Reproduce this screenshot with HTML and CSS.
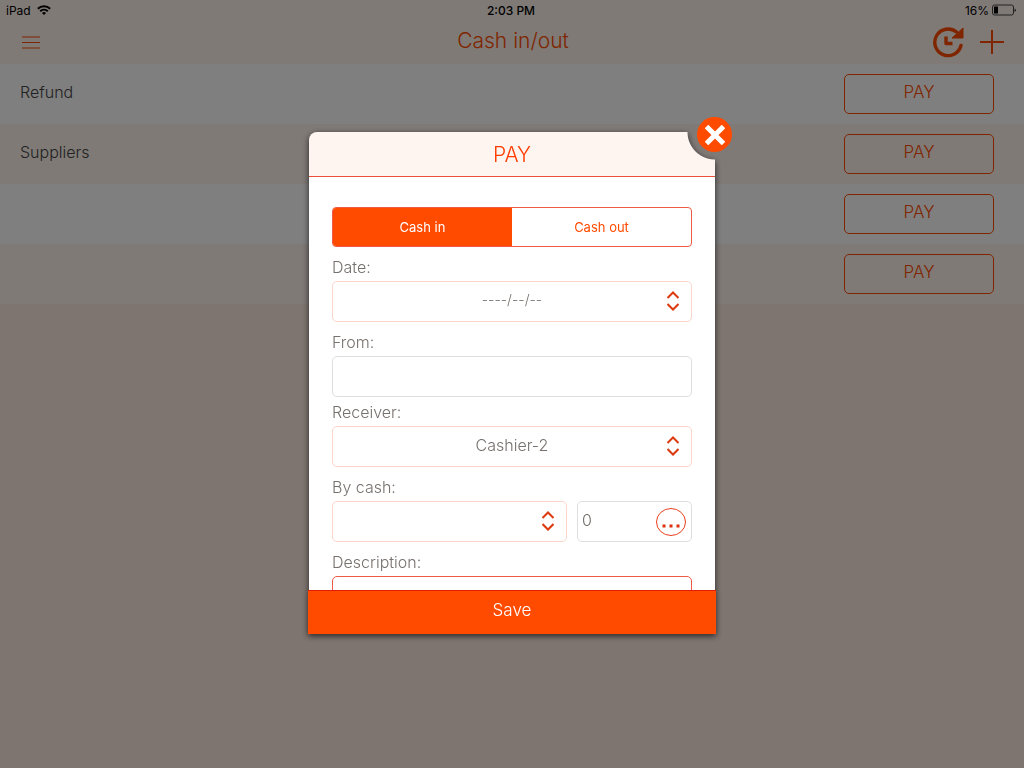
FILE: index.html
```
<!DOCTYPE html>
<html lang="en">
<head>
    <meta charset="UTF-8">
    <meta name="viewport" content="width=device-width, initial-scale=1.0">
    <title>Cash in/out</title>
    <link rel="stylesheet" href="styles.css">
</head>
<body>
    <header class="top">
        <div class="status-bar">
            <div class="status-left">
                <span>iPad</span>
                <svg width="14" height="10" viewBox="0 0 14 10" fill="none" stroke="#000" stroke-width="2">
                    <path d="M0.8 3.8a9 9 0 0 1 12.4 0"/>
                    <path d="M3.2 6.3a5.5 5.5 0 0 1 7.6 0"/>
                    <path d="M7 10L5 8a3 3 0 0 1 4 0z" fill="#000" stroke="none"/>
                </svg>
            </div>
            <time class="clock">2:03 PM</time>
            <div class="status-right">
                <span>16%</span>
                <svg width="24" height="12" viewBox="0 0 24 12">
                    <rect x="0.5" y="1" width="21" height="10" rx="2" fill="none" stroke="#444"/>
                    <rect x="2" y="2.500" width="4" height="7" fill="#000"/>
                    <path d="M22.5 4.500v3.500q1.500-.5 1.500-1.700t-1.500-1.800z" fill="#444"/>
                </svg>
            </div>
        </div>
        <nav class="nav-bar">
            <button class="icon-btn" type="button" aria-label="Menu">
                <svg width="18" height="14" viewBox="0 0 18 14" stroke="#ff4b00">
                    <path d="M0 7.500h18"/>
                    <path d="M0 2h18M0 13h18" stroke-width="2" opacity="0.5"/>
                </svg>
            </button>
            <h1 class="page-title">Cash in/out</h1>
            <div class="nav-actions">
                <button class="icon-btn" type="button" aria-label="History">
                    <svg width="32" height="32" viewBox="0 0 32 32" fill="none" stroke="#ff4b00">
                        <path d="M29 19.500A13.300 13.300 0 1 1 24.500 6" stroke-width="3.400" stroke-linecap="round"/>
                        <path d="M31 2v10H20z" fill="#ff4b00" stroke="#ff4b00" stroke-linejoin="round"/>
                        <path d="M14 10.500v7h6.500" stroke-width="3.400" stroke-linejoin="round"/>
                    </svg>
                </button>
                <button class="icon-btn" type="button" aria-label="Add">
                    <svg width="24" height="24" viewBox="0 0 24 24" stroke="#ff4b00" stroke-width="2">
                        <path d="M0 12h24M12 0v24"/>
                    </svg>
                </button>
            </div>
        </nav>
    </header>

    <main>
        <ul class="list">
            <li class="row"><span>Refund</span><button class="pay-btn" type="button">PAY</button></li>
            <li class="row"><span>Suppliers</span><button class="pay-btn" type="button">PAY</button></li>
            <li class="row"><span></span><button class="pay-btn" type="button">PAY</button></li>
            <li class="row"><span></span><button class="pay-btn" type="button">PAY</button></li>
        </ul>
    </main>

    <div class="overlay">
        <div class="dialog" role="dialog" aria-labelledby="dialog-title">
            <form class="panel">
                <h2 class="dialog-title" id="dialog-title">PAY</h2>

                <div class="dialog-body">
                    <div class="segmented">
                        <button class="segment active" type="button">Cash in</button>
                        <button class="segment" type="button">Cash out</button>
                    </div>

                    <label for="date">Date:</label>
                    <div class="select-box">
                        <select class="date" id="date"><option>----/--/--</option></select>
                        <svg class="arrows" width="12" height="20" viewBox="0 0 12 20"><path d="M0.500 7L6 1.500 11.500 7M0.500 13L6 18.500 11.500 13"/></svg>
                    </div>

                    <label for="from">From:</label>
                    <input class="field from" id="from" type="text">

                    <label for="receiver">Receiver:</label>
                    <div class="select-box">
                        <select id="receiver"><option>Cashier-2</option></select>
                        <svg class="arrows" width="12" height="20" viewBox="0 0 12 20"><path d="M0.500 7L6 1.500 11.500 7M0.500 13L6 18.500 11.500 13"/></svg>
                    </div>

                    <label for="cash">By cash:</label>
                    <div class="cash-line">
                        <div class="select-box">
                            <select id="cash"><option></option></select>
                            <svg class="arrows" width="12" height="20" viewBox="0 0 12 20"><path d="M0.500 7L6 1.500 11.500 7M0.500 13L6 18.500 11.500 13"/></svg>
                        </div>
                        <div class="amount">
                            <input id="amount" type="text" value="0" aria-label="Amount">
                            <button class="more-btn" type="button" aria-label="More">
                                <svg width="30" height="28" viewBox="0 0 30 28">
                                    <ellipse cx="15" cy="14" rx="14.500" ry="13.500" fill="none" stroke="#e8401c"/>
                                    <path d="M6.500 16.500h3v3h-3zM13.500 16.500h3v3h-3zM20.500 16.500h3v3h-3z" fill="#e03010"/>
                                </svg>
                            </button>
                        </div>
                    </div>

                    <label for="description">Description:</label>
                    <textarea class="description" id="description"></textarea>
                </div>

                <button class="save-btn" type="submit">Save</button>
            </form>
            <button class="close-btn" type="button" aria-label="Close">
                <svg width="20" height="20" viewBox="0 0 20 20" stroke="#fff" stroke-width="5">
                    <path d="M1.500 1.500l17 17M18.500 1.500l-17 17"/>
                </svg>
            </button>
        </div>
    </div>
</body>
</html>
```
FILE: styles.css
```
* {
    box-sizing: border-box;
}

body {
    margin: 0;
    min-height: 100vh;
    background-color: #ffebe0;
    font-family: Inter, 'Liberation Sans', sans-serif;
    font-size: 16px;
    font-weight: 300;
    color: #444;
}

button, input, select, textarea {
    margin: 0;
    font: inherit;
    color: inherit;
}

button {
    padding: 0;
    border: none;
    background: none;
    cursor: pointer;
}

svg {
    display: block;
}

.top {
    background-color: #fff4ed;
}

.status-bar {
    display: grid;
    grid-template-columns: 1fr auto 1fr;
    align-items: center;
    height: 20px;
    padding: 0 8px 0 6px;
    font-size: 12px;
    font-weight: 400;
    color: #000;
}

.status-left, .status-right {
    display: flex;
    align-items: center;
    gap: 6px;
}

.status-right {
    justify-content: flex-end;
    gap: 3px;
}

.clock {
    font-weight: 500;
}

.nav-bar {
    display: grid;
    grid-template-columns: 1fr auto 1fr;
    align-items: center;
    height: 44px;
    padding: 0 20px 0 22px;
}

.icon-btn {
    justify-self: start;
}

.page-title {
    margin: 0;
    padding-bottom: 3px;
    font-size: 21px;
    font-weight: 300;
    color: #ff4b00;
}

.nav-actions {
    display: flex;
    justify-content: flex-end;
    align-items: center;
    gap: 16px;
}

.list {
    margin: 0;
    padding: 0;
    list-style: none;
}

.row {
    display: flex;
    justify-content: space-between;
    align-items: center;
    height: 60px;
    padding: 0 30px 0 20px;
    background-color: #fff;
}

.row:nth-child(even) {
    background-color: #fff4ed;
}

.row span {
    padding-bottom: 4px;
}

.pay-btn {
    width: 150px;
    height: 40px;
    padding-bottom: 4px;
    border: 1px solid #ff4b00;
    border-radius: 5px;
    font-size: 17px;
    color: #ff4b00;
}

.overlay {
    position: fixed;
    inset: 0;
    display: flex;
    justify-content: center;
    align-items: center;
    padding-bottom: 2px;
    background-color: rgba(0, 0, 0, 0.5);
}

.dialog {
    position: relative;
    width: 406px;
    color: #77706c;
}

.panel {
    filter: drop-shadow(0 2px 3px rgba(0, 0, 0, 0.7));
}

/* top right corner is cut out around the close button */
.dialog-title {
    margin: 0;
    padding-top: 1px;
    border-bottom: 1px solid #e8503a;
    border-radius: 8px 0 0 0;
    background: radial-gradient(circle at 100% 0, transparent 27px, #fff5f0 28px) border-box;
    font-size: 21px;
    font-weight: 300;
    line-height: 43px;
    text-align: center;
    color: #ff3c00;
}

.close-btn {
    position: absolute;
    top: -15px;
    right: -17px;
    display: flex;
    justify-content: center;
    align-items: center;
    width: 35px;
    height: 35px;
    border-radius: 50%;
    background-color: #ff4b00;
}

.dialog-body {
    height: 413px;
    padding: 30px 23px 0;
    overflow: hidden;
    background-color: #fff;
}

.segmented {
    display: flex;
    height: 40px;
    margin-bottom: 10px;
    border: 1px solid #ee5a45;
    border-radius: 4px;
    overflow: hidden;
}

.segment {
    flex: 1;
    padding-bottom: 1px;
    font-size: 13px;
    font-weight: 400;
    color: #ff4b00;
}

.segment.active {
    background-color: #ff4b00;
    color: #fff;
}

label {
    display: block;
    margin-bottom: 4px;
    line-height: 20px;
}

.select-box {
    position: relative;
    height: 41px;
    margin-bottom: 10px;
}

.select-box select {
    width: 100%;
    height: 100%;
    padding: 0 0 4px;
    border: 1px solid #fcd5cb;
    border-radius: 5px;
    appearance: none;
    background: none;
    text-align: center;
    text-align-last: center;
}

.select-box .date {
    font-size: 14px;
}

.arrows {
    position: absolute;
    top: 10px;
    right: 13px;
    pointer-events: none;
    fill: none;
    stroke: #dd3a10;
    stroke-width: 2;
}

.field, .amount {
    height: 41px;
    border: 1px solid #dedede;
    border-radius: 5px;
}

.field {
    display: block;
    width: 100%;
    padding: 0 5px;
}

.from {
    margin-bottom: 5px;
}

.cash-line {
    display: grid;
    grid-template-columns: 1fr 115px;
    gap: 10px;
}

.amount {
    display: flex;
    align-items: center;
    padding: 0 5px 0 4px;
}

.amount input {
    flex: 1;
    width: 0;
    padding: 0 0 4px;
    border: none;
    outline: none;
    background: none;
}

.description {
    display: block;
    width: 100%;
    height: 80px;
    border: 1px solid #ee5a45;
    border-radius: 5px;
    resize: none;
}

.save-btn {
    display: block;
    width: calc(100% + 2px);
    height: 44px;
    margin: 0 -1px;
    padding-bottom: 5px;
    border-top: 1px solid #e01b00;
    background-color: #ff4b00;
    font-size: 17px;
    color: #fff;
}
```
